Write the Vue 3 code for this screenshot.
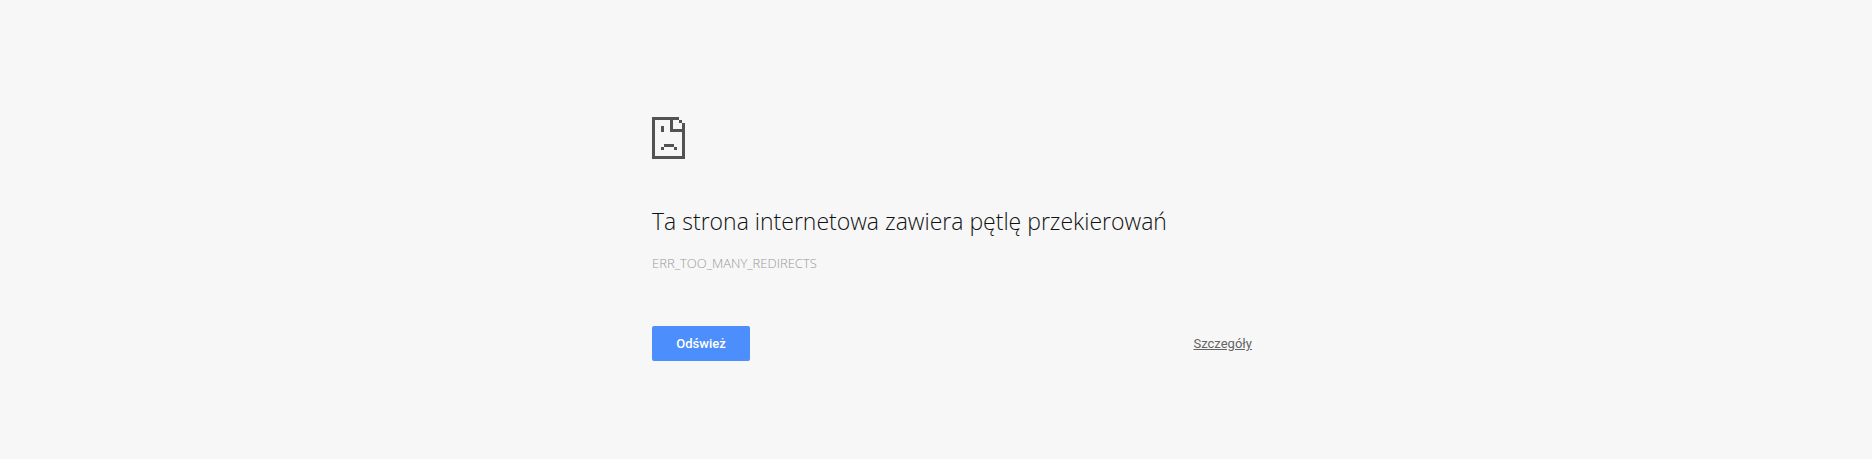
<script setup>
const reload = () => window.location.reload()
</script>

<template>
  <main class="error">
    <svg class="icon" viewBox="0 0 33 42" shape-rendering="crispEdges" aria-hidden="true">
      <path d="M0 0H27V3H21V12H30V6H33V42H0ZM3 3V39H30V15H18V3Z" fill-rule="evenodd" />
      <path d="M27 3H30V6H27ZM9 9H12V15H9ZM12 27H22V30H12ZM9 30H12V33H9ZM22 30H25V33H22Z" />
    </svg>
    <h1>Ta strona internetowa zawiera pętlę przekierowań</h1>
    <p class="code">ERR_TOO_MANY_REDIRECTS</p>
    <div class="actions">
      <button type="button" @click="reload">Odśwież</button>
      <a href="#details">Szczegóły</a>
    </div>
  </main>
</template>

<style>
body {
  background: #f7f7f7;
}
</style>

<style scoped>
.error {
  box-sizing: content-box;
  max-width: 600px;
  margin: 0 auto;
  padding: 117px 0 0 32px;
  font-family: "Open Sans", sans-serif;
  color: #111;
}
.icon {
  display: block;
  width: 33px;
  height: 42px;
  fill: #535353;
}
h1 {
  margin: 46px 0 0;
  font-size: 23px;
  line-height: 32px;
  font-weight: 300;
}
.code {
  margin: 17px 0 0;
  font-size: 13px;
  line-height: 18px;
  font-weight: 300;
  color: #999;
}
.actions {
  display: flex;
  justify-content: space-between;
  align-items: center;
  margin-top: 54px;
  font-family: Roboto, sans-serif;
  font-size: 13px;
}
button {
  height: 35px;
  min-width: 98px;
  padding: 0 24px;
  border: 0;
  border-radius: 2px;
  background: #4c8efb;
  color: #fff;
  font: inherit;
  font-weight: 500;
}
a {
  color: #646464;
}
</style>
